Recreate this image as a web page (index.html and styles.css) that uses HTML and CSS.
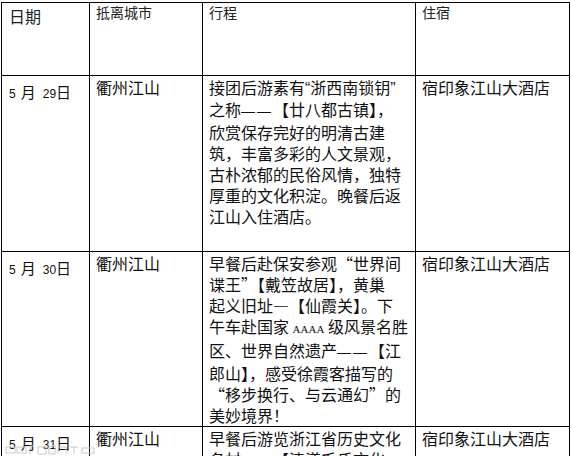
FILE: index.html
```html
<!DOCTYPE html>
<html lang="zh-CN">
<head>
<meta charset="utf-8">
<title>行程表</title>
<link rel="stylesheet" href="styles.css">
</head>
<body>
<table class="plan">
  <colgroup>
    <col class="c-date">
    <col class="c-city">
    <col class="c-trip">
    <col class="c-hotel">
  </colgroup>
  <tr class="head">
    <td class="h-date">日期</td>
    <td>抵离城市</td>
    <td>行程</td>
    <td>住宿</td>
  </tr>
  <tr class="r1">
    <td class="date"><span class="num">5</span><span class="cj">月</span><span class="num d2">29</span><span class="cj">日</span></td>
    <td>衢州江山</td>
    <td class="trip">接团后游素有<span class="q">“</span>浙西南锁钥<span class="q">”</span><br>之称<span class="dash">——</span>【廿八都古镇】，<br>欣赏保存完好的明清古建<br>筑，丰富多彩的人文景观，<br>古朴浓郁的民俗风情，独特<br>厚重的文化积淀。晚餐后返<br>江山入住酒店。</td>
    <td>宿印象江山大酒店</td>
  </tr>
  <tr class="r2">
    <td class="date"><span class="num">5</span><span class="cj">月</span><span class="num d2">30</span><span class="cj">日</span></td>
    <td>衢州江山</td>
    <td class="trip">早餐后赴保安参观“世界间<br>谍王”【戴笠故居】，黄巢<br>起义旧址—【仙霞关】。下<br>午车赴国家 <span class="lat">AAAA</span> 级风景名胜<br>区、世界自然遗产<span class="dash">——</span>【江<br>郎山】，感受徐霞客描写的<br>“移步换行、与云通幻”的<br>美妙境界！</td>
    <td>宿印象江山大酒店</td>
  </tr>
  <tr class="r3">
    <td class="date"><span class="num">5</span><span class="cj">月</span><span class="num d2">31</span><span class="cj">日</span></td>
    <td>衢州江山</td>
    <td class="trip">早餐后游览浙江省历史文化<br>名村<span class="dash">——</span>【清漾毛氏文化</td>
    <td>宿印象江山大酒店</td>
  </tr>
</table>
<div class="mark" aria-hidden="true">
  <svg width="100" height="12" viewBox="0 0 100 12">
    <g fill="none" stroke="#c8c8c8" stroke-width="1">
      <rect x="2" y="3" width="9" height="6"/>
      <rect x="13" y="3" width="9" height="6"/>
      <path d="M26 10 V2 H30"/>
      <rect x="34" y="3" width="8" height="7"/>
      <rect x="45" y="2" width="6" height="8"/>
      <path d="M54 10 V3 H62 V10"/>
      <path d="M66 3 H74 M70 3 V10"/>
      <rect x="78" y="4" width="12" height="5"/>
    </g>
  </svg>
</div>
</body>
</html>
```

FILE: styles.css
```css
html, body {
  margin: 0;
  padding: 0;
  background: #fff;
  overflow: hidden;
}

body {
  width: 571px;
  height: 456px;
  position: relative;
  font-family: "Noto Sans CJK SC", "Liberation Sans", sans-serif;
  color: #111;
}

.plan {
  border-collapse: collapse;
  table-layout: fixed;
  width: 569px;
  margin: 2px 0 0 1px;
  font-size: 16px;
  line-height: 21px;
}

.c-date { width: 88px; }
.c-city { width: 113px; }
.c-trip { width: 213px; }
.c-hotel { width: 154px; }

.plan td {
  border: 1px solid #000;
  vertical-align: top;
  padding: 1px 6px 0 6px;
  white-space: nowrap;
  overflow: hidden;
}

.head { height: 73px; }
.r1 { height: 176px; }
.r2 { height: 168px; }
.r3 { height: 36px; }

.head td {
  font-size: 14px;
  line-height: 18px;
  padding-top: 0;
  color: #222;
}

.head td.h-date {
  font-size: 16px;
  line-height: 20px;
  padding-top: 3px;
  padding-left: 7px;
}

td.date {
  padding-top: 5px;
  padding-left: 7px;
  font-size: 15px;
}

.num {
  font-family: "Liberation Sans", sans-serif;
  font-size: 12px;
}

.cj {
  margin-left: 5px;
}

.d2 {
  margin-left: 7px;
}

.d2 + .cj {
  margin-left: 0;
}

.q {
  font-family: "Liberation Sans", sans-serif;
}

.dash {
  font-family: "Liberation Sans", sans-serif;
  font-size: 14px;
  letter-spacing: 2px;
}

.lat {
  font-family: "Liberation Serif", serif;
  font-size: 11px;
}

.mark {
  position: absolute;
  left: 4px;
  top: 444px;
  height: 12px;
}

.mark svg {
  display: block;
}
```
